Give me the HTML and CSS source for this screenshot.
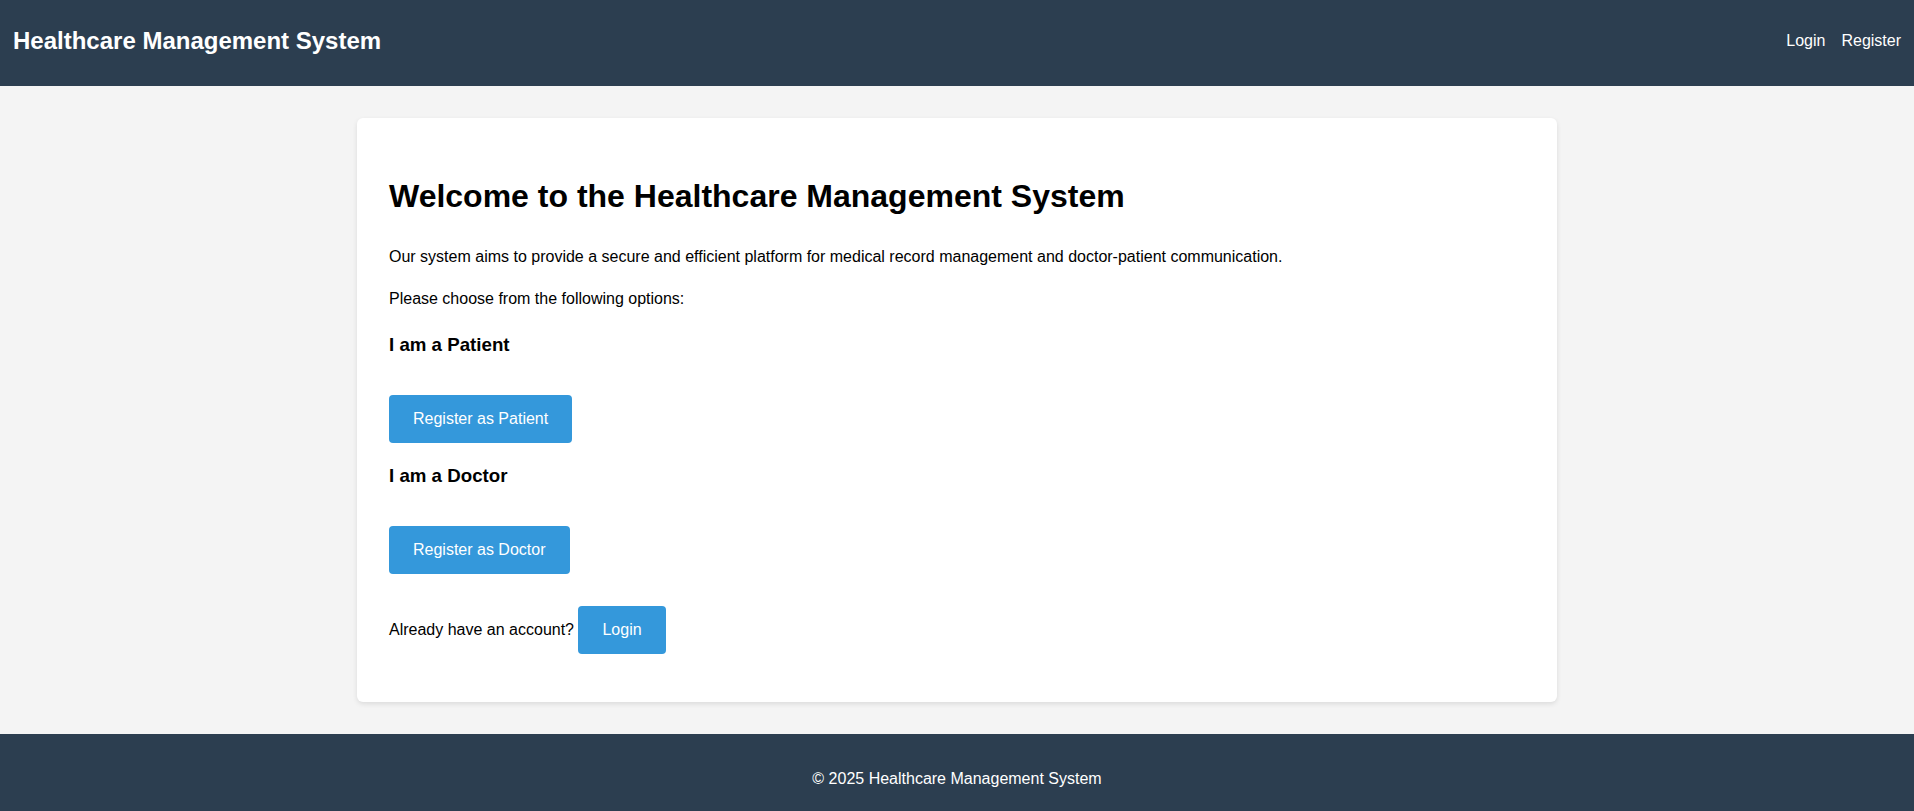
FILE: index.html
```html
<!DOCTYPE html>
<html lang="en">
<head>
<meta charset="utf-8">
<title>Healthcare Management System</title>
<link rel="stylesheet" href="styles.css">
</head>
<body>
<header class="site-header">
  <h1 class="brand">Healthcare Management System</h1>
  <nav class="nav">
    <a href="#" class="nav-link">Login</a>
    <a href="#" class="nav-link">Register</a>
  </nav>
</header>
<main class="main">
  <section class="card">
    <h1 class="title">Welcome to the Healthcare Management System</h1>
    <p>Our system aims to provide a secure and efficient platform for medical record management and doctor-patient communication.</p>
    <p>Please choose from the following options:</p>
    <div class="option">
      <h3 class="option-title">I am a Patient</h3>
      <a href="#" class="btn">Register as Patient</a>
    </div>
    <div class="option">
      <h3 class="option-title">I am a Doctor</h3>
      <a href="#" class="btn">Register as Doctor</a>
    </div>
    <p>Already have an account? <a href="#" class="btn">Login</a></p>
  </section>
</main>
<footer class="site-footer">
  <p>&copy; 2025 Healthcare Management System</p>
</footer>
</body>
</html>
```
FILE: styles.css
```css
* { box-sizing: border-box; }
html, body { margin: 0; padding: 0; }
body {
  font-family: "Liberation Sans", Arial, sans-serif;
  font-size: 16px;
  line-height: 1.6;
  color: #000;
  background: #f4f4f4;
}
.site-header {
  background: #2c3e50;
  color: #fff;
  height: 86px;
  padding: 0 12px 0 13px;
  display: flex;
  justify-content: space-between;
  align-items: flex-start;
}
.brand {
  margin: 21.5px 0 0;
  font-size: 24px;
  font-weight: bold;
}
.nav {
  display: flex;
  gap: 16px;
  margin-top: 27.5px;
  padding-right: 1px;
}
.nav-link {
  color: #fff;
  text-decoration: none;
}
.main {
  padding: 32px 0;
}
.card {
  max-width: 1200px;
  margin: 0 auto;
  background: #fff;
  padding: 32px;
  border-radius: 6px;
  box-shadow: 0 2px 5px rgba(0, 0, 0, 0.1);
}
.title {
  font-size: 32px;
  margin: 21.44px 0;
}
p { margin: 16px 0; }
.option-title {
  font-size: 18.72px;
  margin: 18.72px 0;
}
.btn {
  display: inline-block;
  margin-top: 16px;
  padding: 11.2px 24px;
  background: #3498db;
  color: #fff;
  text-decoration: none;
  border-radius: 4px;
}
.site-footer {
  background: #2c3e50;
  color: #fff;
  text-align: center;
  padding: 16px;
}
```
